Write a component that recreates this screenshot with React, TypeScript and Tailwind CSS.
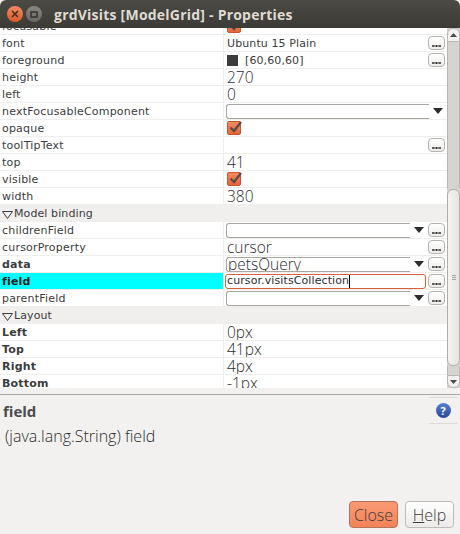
import type { ReactNode } from "react";

const dejavu = "font-['DejaVu_Sans',sans-serif]";
const light = "font-['Open_Sans',sans-serif] font-light";

function DotsButton() {
    return (
        <div className="mr-[2px] ml-auto flex h-[14px] w-[17px] shrink-0 items-end justify-center rounded-[4px] border border-[#b5b3ae] bg-gradient-to-b from-white to-[#eeedeb] pb-[2px]">
            <svg width="9" height="3" viewBox="0 0 9 3">
                <path d="M0 2h9M1 1v2M4.5 1v2M8 1v2" stroke="#2d2d2d" strokeWidth="1" fill="none" />
            </svg>
        </div>
    );
}

function Check() {
    return (
        <div className="relative ml-[2px] h-[14px] w-[14px] rounded-[2px] border border-[#c9532c] bg-gradient-to-b from-[#f28a5f] to-[#e2673a]">
            <svg className="absolute -top-[2px] left-0" width="15" height="14" viewBox="0 0 15 14">
                <path d="M2.5 7.5 L6 11 L13 2" stroke="#5a4a42" strokeWidth="2.2" fill="none" />
            </svg>
        </div>
    );
}

function Combo({ text, withButton }: { text?: string; withButton?: boolean }) {
    return (
        <div className="flex h-full min-w-0 flex-1 items-center">
            <div className={`${withButton ? "w-[184px]" : "w-[203px]"} ml-[1px] h-[15px] overflow-hidden rounded-l-[3px] border-y border-l border-[#a9a7a2] bg-white`}>
                {text && <div className={`${light} -mt-[4px] pl-[1px] text-[15.5px] leading-[20px] text-[#2c2c2c]`}>{text}</div>}
            </div>
            <svg className="ml-[4px]" width="10" height="6" viewBox="0 0 10 6">
                <path d="M0 0h10L5 6z" fill="#2d2d2d" />
            </svg>
            <div className={withButton ? "ml-[4px] flex flex-1" : "hidden"}>
                <DotsButton />
            </div>
        </div>
    );
}

function Row({ name, bold, active, children }: { name: string; bold?: boolean; active?: boolean; children?: ReactNode }) {
    return (
        <div className="flex h-[17px] shrink-0 border-b border-[#eeeeec] bg-white">
            <div className={`${dejavu} ${bold ? "font-bold" : ""} ${active ? "bg-[#00ffff] text-[#1c1c1c]" : "text-[#3c3c3c]"} flex w-[223px] shrink-0 items-center pt-[2px] pl-[2px] text-[11px] tracking-[0.2px]`}>
                {name}
            </div>
            <div className="flex min-w-0 flex-1 items-center overflow-hidden border-l border-[#eeeeec] pl-[1px]">{children}</div>
        </div>
    );
}

function Plain({ children }: { children: ReactNode }) {
    return <span className={`${light} ml-[2px] text-[15.5px] leading-[17px] text-[#2c2c2c]`}>{children}</span>;
}

function Section({ title }: { title: string }) {
    return (
        <div className={`${dejavu} flex h-[17px] shrink-0 items-center bg-[#f0efed] pt-[2px] pl-[2px] text-[11px] tracking-[0.1px] text-[#3c3c3c]`}>
            <svg className="mr-[1px]" width="11" height="8" viewBox="0 0 11 8">
                <path d="M0.5 0.5h10L5.5 7.5z" fill="none" stroke="#3c3c3c" strokeWidth="1" />
            </svg>
            {title}
        </div>
    );
}

function Scrollbar() {
    return (
        <div className="flex w-[13px] shrink-0 flex-col bg-[#d6d4d0]">
            <div className="flex h-[14px] shrink-0 items-center justify-center rounded-t-[6px] border border-[#b9b7b2] bg-[#f2f1ef]">
                <svg width="7" height="4" viewBox="0 0 7 4"><path d="M0 4h7L3.5 0z" fill="#4a4a4a" /></svg>
            </div>
            <div className="h-[147px] shrink-0 border-x border-[#b9b7b2]" />
            <div className="flex h-[177px] shrink-0 items-center justify-center rounded-[6px] border border-[#b0aea9] bg-gradient-to-r from-[#f4f3f2] to-[#e6e5e2]">
                <div className="flex flex-col gap-[1px]">
                    <div className="h-px w-[4px] bg-[#a5a39e]" />
                    <div className="h-px w-[4px] bg-[#a5a39e]" />
                    <div className="h-px w-[4px] bg-[#a5a39e]" />
                </div>
            </div>
            <div className="h-[9px] shrink-0 border-x border-[#b9b7b2]" />
            <div className="flex h-[13px] shrink-0 items-center justify-center rounded-b-[6px] border border-[#b9b7b2] bg-[#f2f1ef]">
                <svg width="7" height="4" viewBox="0 0 7 4"><path d="M0 0h7L3.5 4z" fill="#4a4a4a" /></svg>
            </div>
        </div>
    );
}

export default function App() {
    return (
        <div className="flex h-[534px] w-[460px] flex-col overflow-hidden bg-[#f2f1ef]">
            <div className="flex h-[28px] shrink-0 items-center rounded-t-[6px] bg-gradient-to-b from-[#4b4a45] to-[#3d3b36] pl-[7px]">
                <div className="flex h-[16px] w-[16px] items-center justify-center rounded-full bg-gradient-to-b from-[#f08a5f] to-[#dc5a2c]">
                    <svg width="8" height="8" viewBox="0 0 8 8">
                        <path d="M1 1l6 6M7 1l-6 6" stroke="#4a2b1c" strokeWidth="1.6" />
                    </svg>
                </div>
                <div className="ml-[3px] flex h-[16px] w-[16px] items-center justify-center rounded-full bg-gradient-to-b from-[#8a8882] to-[#6a6862]">
                    <div className="h-[7px] w-[8px] rounded-[1px] border-2 border-[#44423d]" />
                </div>
                <span className="ml-[12px] font-['Open_Sans',sans-serif] text-[14px] font-bold tracking-[0.22px] text-[#dfdbd2]">
                    grdVisits [ModelGrid] - Properties
                </span>
            </div>

            <div className="flex h-[360px] shrink-0 overflow-hidden bg-white">
                <div className="min-w-0 flex-1 overflow-hidden">
                    <div className="-mt-[10px] flex flex-col">
                        <Row name="focusable"><Check /></Row>
                        <Row name="font">
                            <span className={`${dejavu} ml-[2px] pt-[2px] text-[11px] tracking-[0.1px] text-[#3c3c3c]`}>Ubuntu 15 Plain</span>
                            <DotsButton />
                        </Row>
                        <Row name="foreground">
                            <div className="ml-[2px] h-[11px] w-[11px] bg-[#3c3c3c]" />
                            <span className={`${dejavu} ml-[7px] pt-[2px] text-[11px] tracking-[0.1px] text-[#3c3c3c]`}>[60,60,60]</span>
                            <DotsButton />
                        </Row>
                        <Row name="height"><Plain>270</Plain></Row>
                        <Row name="left"><Plain>0</Plain></Row>
                        <Row name="nextFocusableComponent"><Combo /></Row>
                        <Row name="opaque"><Check /></Row>
                        <Row name="toolTipText"><DotsButton /></Row>
                        <Row name="top"><Plain>41</Plain></Row>
                        <Row name="visible"><Check /></Row>
                        <Row name="width"><Plain>380</Plain></Row>
                        <Section title="Model binding" />
                        <Row name="childrenField"><Combo withButton /></Row>
                        <Row name="cursorProperty">
                            <Plain>cursor</Plain>
                            <DotsButton />
                        </Row>
                        <Row name="data" bold><Combo text="petsQuery" withButton /></Row>
                        <Row name="field" bold active>
                            <div className={`${dejavu} flex h-[15px] w-[201px] items-center rounded-[3px] border border-[#d9603a] pt-[1px] pl-[1px] text-[11px] tracking-[0.1px] text-[#2d2d2d]`}>
                                cursor.visitsCollection
                                <div className="h-[13px] w-px bg-black" />
                            </div>
                            <DotsButton />
                        </Row>
                        <Row name="parentField"><Combo withButton /></Row>
                        <Section title="Layout" />
                        <Row name="Left" bold><Plain>0px</Plain></Row>
                        <Row name="Top" bold><Plain>41px</Plain></Row>
                        <Row name="Right" bold><Plain>4px</Plain></Row>
                        <Row name="Bottom" bold><Plain>-1px</Plain></Row>
                    </div>
                </div>
                <Scrollbar />
            </div>

            <div className="mt-[6px] flex min-h-0 flex-1 flex-col border-t border-[#a8a7a3] px-[3px] pb-[6px]">
                <div className="flex items-start justify-between pt-[2px]">
                    <div className="pt-[4px]">
                        <div className="font-['Open_Sans',sans-serif] text-[15px] font-bold leading-[20px] text-[#4c4c4c]">field</div>
                        <div className={`${light} mt-[5px] pl-[2px] text-[16px] leading-[20px] text-[#2c2c2c]`}>(java.lang.String) field</div>
                    </div>
                    <div className="flex h-[27px] w-[28px] items-center justify-center border-y border-[#dddbd8]">
                        <div className="flex h-[15px] w-[15px] items-center justify-center rounded-full bg-gradient-to-b from-[#5a7fd0] to-[#27479c] font-['Open_Sans',sans-serif] text-[11px] font-bold leading-none text-white">
                            ?
                        </div>
                    </div>
                </div>
                <div className="mt-auto flex justify-end gap-[7px] pr-[3px]">
                    <button className={`${light} h-[27px] w-[49px] rounded-[4px] border border-[#b5735c] bg-gradient-to-b from-[#f99a74] to-[#f38258] text-[16px] text-[#3c3c3c]`}>
                        Close
                    </button>
                    <button className={`${light} h-[27px] w-[49px] rounded-[4px] border border-[#bdbbb7] bg-gradient-to-b from-white to-[#ecebe9] text-[16px] text-[#3c3c3c]`}>
                        <span className="underline">H</span>elp
                    </button>
                </div>
            </div>
        </div>
    );
}
